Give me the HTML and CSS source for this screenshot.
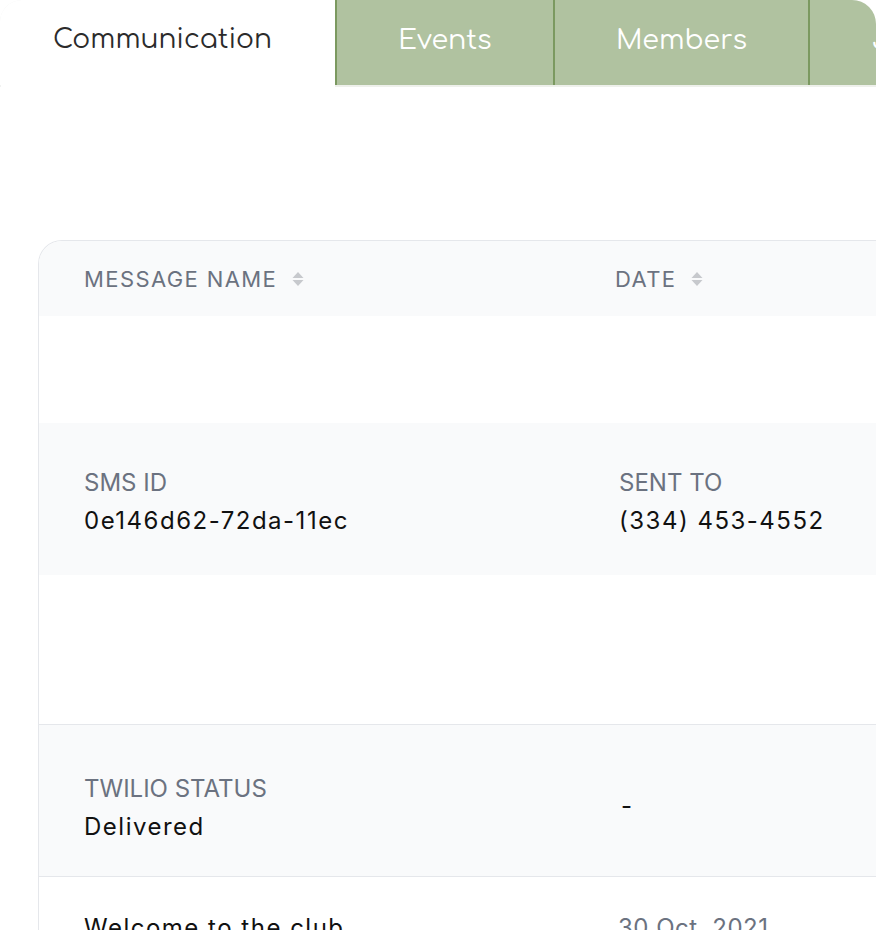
FILE: index.html
```html
<!DOCTYPE html>
<html lang="en">
<head>
<meta charset="utf-8">
<title>Communication</title>
<link rel="stylesheet" href="styles.css">
</head>
<body>
<div class="page">
  <nav class="tabs">
    <div class="tab tab-active">Communication</div>
    <div class="tab tab-events">Events</div>
    <div class="tab tab-members">Members</div>
    <div class="tab tab-jobs">Jobs</div>
  </nav>

  <main class="content">
    <div class="card">
      <div class="row row-head">
        <div class="cell col1"><span class="th">MESSAGE NAME</span><svg class="sort" viewBox="0 0 12 16" width="12" height="16"><path d="M6 1 L11.5 7 H0.5 Z" fill="#c7c9cd"/><path d="M6 15 L11.5 9 H0.5 Z" fill="#c7c9cd"/></svg></div>
        <div class="cell col2"><span class="th">DATE</span><svg class="sort" viewBox="0 0 12 16" width="12" height="16"><path d="M6 1 L11.5 7 H0.5 Z" fill="#c7c9cd"/><path d="M6 15 L11.5 9 H0.5 Z" fill="#c7c9cd"/></svg></div>
      </div>
      <div class="row row-gap1"></div>
      <div class="row row-detail alt">
        <div class="cell col1 stack"><span class="label">SMS ID</span><span class="value">0e146d62-72da-11ec</span></div>
        <div class="cell col2 stack col2-shift"><span class="label">SENT TO</span><span class="value">(334) 453-4552</span></div>
      </div>
      <div class="row row-gap2"></div>
      <div class="row row-detail alt bordered">
        <div class="cell col1 stack"><span class="label">TWILIO STATUS</span><span class="value">Delivered</span></div>
        <div class="cell col2 stack col2-dash"><span class="value">-</span></div>
      </div>
      <div class="row row-msg">
        <div class="cell col1"><span class="value">Welcome to the club</span></div>
        <div class="cell col2 col2-date"><span class="date">30 Oct, 2021</span></div>
      </div>
    </div>
  </main>
</div>
</body>
</html>
```

FILE: styles.css
```css
* { box-sizing: border-box; }

html, body {
  margin: 0;
  padding: 0;
  background: #ffffff;
}

body {
  font-family: Inter, "Noto Sans", "Liberation Sans", sans-serif;
  color: #111827;
  overflow: hidden;
  width: 876px;
  height: 930px;
}

.page {
  width: 876px;
}

/* Tabs */
.tabs {
  display: flex;
  height: 87px;
  width: 876px;
  border-top-left-radius: 22px;
  border-top-right-radius: 24px;
  overflow: hidden;
  box-shadow: inset 1px 1px 0 #f1f2f1;
}

.tab {
  flex: none;
  height: 85px;
  display: flex;
  align-items: center;
  justify-content: center;
  font-family: "Comfortaa", "Lato", "Noto Sans", sans-serif;
  font-size: 27px;
  letter-spacing: 0;
  color: #ffffff;
  background: #b0c2a0;
  border-left: 2px solid #7b9960;
  box-shadow: 0 2px 0 #eef0eb;
  padding-bottom: 6px;
}

.tab-active {
  width: 335px;
  background: #ffffff;
  color: #2b2b2b;
  border-left: none;
  box-shadow: none;
  font-size: 26.5px;
  padding-right: 10px;
}

.tab-events { width: 218px; }
.tab-members { width: 255px; }
.tab-jobs {
  width: 200px;
  justify-content: flex-start;
  padding-left: 62px;
}

/* Content */
.content {
  padding: 153px 0 0 38px;
}

.card {
  width: 900px;
  border: 1px solid #e5e7eb;
  border-right: none;
  border-top-left-radius: 24px;
  overflow: hidden;
  background: #ffffff;
}

.row {
  display: flex;
  align-items: center;
}

.alt { background: #f9fafb; }

.row-head {
  height: 75px;
  background: #f9fafb;
}

.row-gap1 { height: 107px; }
.row-gap2 { height: 149px; }

.row-detail {
  height: 152px;
  padding-top: 6px;
}

.bordered {
  border-top: 1px solid #e5e7eb;
  border-bottom: 1px solid #e5e7eb;
  height: 153px;
  padding-top: 14px;
}

.row-msg {
  height: 100px;
  align-items: flex-start;
  padding-top: 32px;
}

.cell {
  display: flex;
  align-items: center;
}

.col1 {
  width: 576px;
  padding-left: 45px;
}

.col2 {
  flex: 1;
}

.col2-shift { padding-left: 4px; }
.col2-dash { padding-left: 6px; margin-top: -4px; }
.col2-date { padding-left: 3px; }

.stack {
  flex-direction: column;
  align-items: flex-start;
}

.th {
  font-size: 22px;
  font-weight: 400;
  letter-spacing: 1.4px;
  color: #6b7280;
}

.sort {
  margin-left: 15px;
  margin-top: 1px;
}

.label {
  font-size: 24px;
  line-height: 38px;
  color: #6b7280;
  letter-spacing: 0;
}

.value {
  font-size: 24px;
  line-height: 38px;
  color: #111111;
  letter-spacing: 1.5px;
}

.date {
  font-size: 24px;
  line-height: 38px;
  color: #6b7280;
  letter-spacing: 0.5px;
}
```
